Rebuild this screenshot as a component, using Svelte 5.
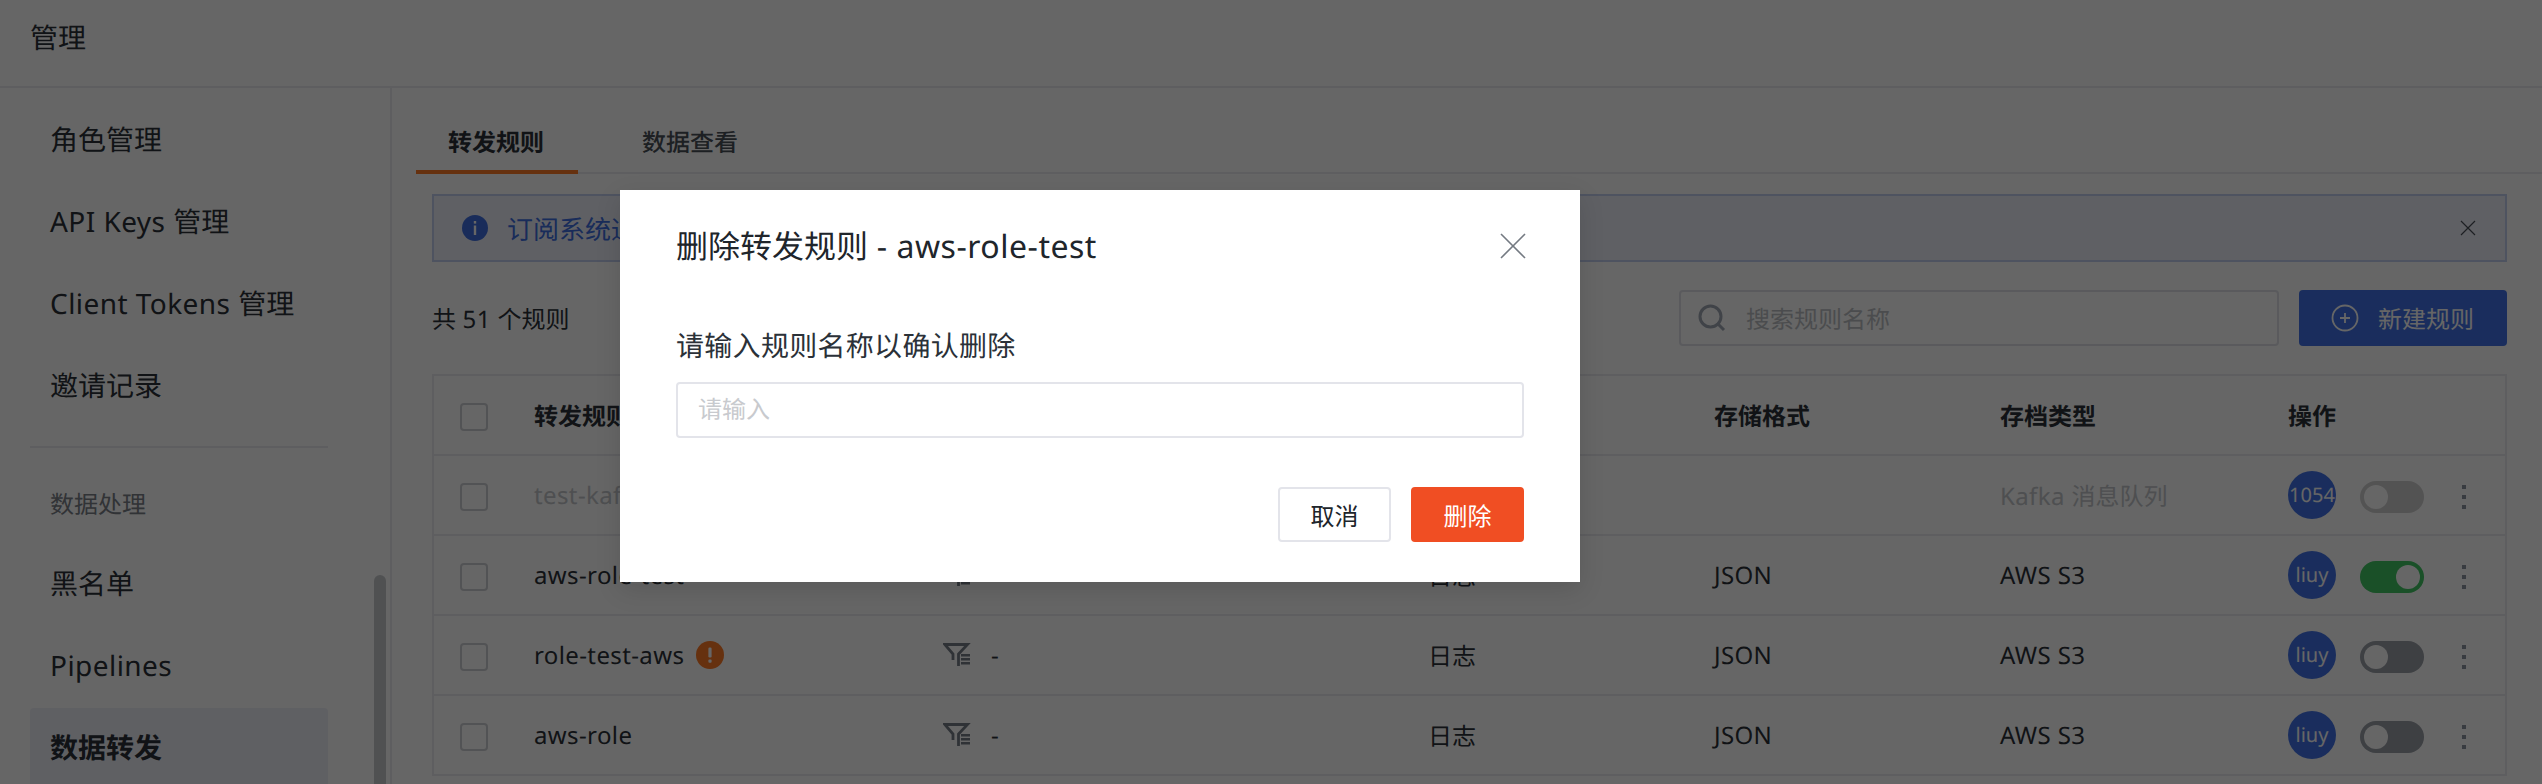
<script lang="ts">
  const nav_top = [`角色管理`, `API Keys 管理`, `Client Tokens 管理`, `邀请记录`]
  const nav_bottom = [`黑名单`, `Pipelines`]

  interface Rule {
    name: string
    filter?: string
    kind?: string
    format?: string
    archive: string
    owner: string
    on: boolean
    disabled?: boolean
    warn?: boolean
  }
  const rules: Rule[] = [
    { name: `test-kafka`, archive: `Kafka 消息队列`, owner: `1054`, on: false, disabled: true },
    { name: `aws-role-test`, filter: `-`, kind: `日志`, format: `JSON`, archive: `AWS S3`, owner: `liuy`, on: true },
    { name: `role-test-aws`, filter: `-`, kind: `日志`, format: `JSON`, archive: `AWS S3`, owner: `liuy`, on: false, warn: true },
    { name: `aws-role`, filter: `-`, kind: `日志`, format: `JSON`, archive: `AWS S3`, owner: `liuy`, on: false },
  ]

  // latin runs need a touch of tracking, cjk runs stay on the em grid
  const parts = (text: string) => text.split(/([\x00-\x7f]+)/).filter(Boolean)
  const is_latin = (text: string) => /^[\x00-\x7f]/.test(text)
</script>

{#snippet mixed(text)}
  {#each parts(text) as part}<span class:lat={is_latin(part)}>{part}</span>{/each}
{/snippet}

<div class="page">
  <header class="topbar">管理</header>
  <div class="body">
    <aside class="sidebar">
      <nav class="nav">
        {#each nav_top as item}
          <div class="nav-item">{@render mixed(item)}</div>
        {/each}
        <div class="nav-divider"></div>
        <div class="nav-group">数据处理</div>
        {#each nav_bottom as item}
          <div class="nav-item">{@render mixed(item)}</div>
        {/each}
        <div class="nav-item active">数据转发</div>
      </nav>
      <div class="scroll-thumb"></div>
    </aside>

    <main class="main">
      <div class="tabs">
        <div class="tab active">转发规则</div>
        <div class="tab">数据查看</div>
      </div>

      <div class="content">
        <div class="banner">
          <svg class="info" viewBox="0 0 26 26" width="26" height="26">
            <circle cx="13" cy="13" r="13" fill="#3f6fe0" />
            <rect x="11.8" y="6" width="2.4" height="2.6" fill="#fff" />
            <rect x="11.8" y="10.5" width="2.4" height="9.5" fill="#fff" />
          </svg>
          <span class="banner-text">订阅系统通知将发送至所配置的转发规则</span>
          <svg class="banner-close" viewBox="0 0 16 16" width="16" height="16">
            <path d="M1 1 15 15M15 1 1 15" stroke="#4a4f57" stroke-width="1.2" fill="none" />
          </svg>
        </div>

        <div class="toolbar">
          <span class="count">{@render mixed(`共 51 个规则`)}</span>
          <div class="search">
            <svg viewBox="0 0 30 30" width="30" height="30">
              <circle cx="13.5" cy="13.5" r="10.5" stroke="#a0a8b4" stroke-width="3" fill="none" />
              <path d="M21 21 27 27" stroke="#a0a8b4" stroke-width="3" fill="none" />
            </svg>
            <span>搜索规则名称</span>
          </div>
          <div class="create">
            <svg viewBox="0 0 28 28" width="28" height="28">
              <circle cx="14" cy="14" r="12.5" stroke="#fff" stroke-width="1.8" fill="none" />
              <path d="M14 9v10M9 14h10" stroke="#fff" stroke-width="1.8" fill="none" />
            </svg>
            <span>新建规则</span>
          </div>
        </div>

        <div class="table">
          <div class="row head">
            <span class="check"></span>
            <span>转发规则名称</span>
            <span>过滤条件</span>
            <span>数据类型</span>
            <span>存储格式</span>
            <span>存档类型</span>
            <span>操作</span>
          </div>
          {#each rules as rule}
            <div class="row" class:disabled={rule.disabled}>
              <span class="check"></span>
              <span class="name">
                <span class="lat">{rule.name}</span>
                {#if rule.warn}
                  <svg viewBox="0 0 28 28" width="28" height="28">
                    <circle cx="14" cy="14" r="14" fill="#ff7a26" />
                    <rect x="12.4" y="6.5" width="3.2" height="10" rx="1.2" fill="#fff" />
                    <rect x="12.4" y="18.5" width="3.2" height="3.2" rx="1" fill="#fff" />
                  </svg>
                {/if}
              </span>
              <span class="filter">
                {#if rule.filter}
                  <svg viewBox="0 0 28 24" width="28" height="24">
                    <path d="M10 17V11L1.8 1.5H24.5L15.5 11V23" stroke="#767e88" stroke-width="2.8" fill="none" />
                    <path d="M18 12.2h9M18 16.2h9M18 20.2h9" stroke="#767e88" stroke-width="2.4" fill="none" />
                  </svg>
                  <span>{rule.filter}</span>
                {/if}
              </span>
              <span>{rule.kind ?? ``}</span>
              <span class="lat">{rule.format ?? ``}</span>
              <span>{@render mixed(rule.archive)}</span>
              <span class="ops">
                <span class="avatar">{rule.owner}</span>
                <span class="toggle" class:on={rule.on}></span>
                <span class="more"><i></i><i></i><i></i></span>
              </span>
            </div>
          {/each}
        </div>
      </div>
    </main>
  </div>

  <div class="overlay">
    <div class="modal">
      <div class="modal-head">
        <h2>{@render mixed(`删除转发规则 - aws-role-test`)}</h2>
        <svg viewBox="0 0 26 26" width="26" height="26">
          <path d="M1 1 25 25M25 1 1 25" stroke="#747a82" stroke-width="1.6" fill="none" />
        </svg>
      </div>
      <div class="modal-label">请输入规则名称以确认删除</div>
      <div class="modal-input">请输入</div>
      <div class="modal-actions">
        <button class="btn">取消</button>
        <button class="btn danger">删除</button>
      </div>
    </div>
  </div>
</div>

<style>
  :global(body) {
    overflow: hidden;
  }
  .page {
    position: relative;
    height: 784px;
    overflow: hidden;
    background: #fff;
    color: #2b3138;
    font-family: 'Noto Sans', 'Noto Sans CJK SC', sans-serif;
    font-size: 24px;
    text-rendering: geometricPrecision;
  }
  .lat {
    letter-spacing: 0.016em;
  }
  .topbar {
    box-sizing: border-box;
    height: 88px;
    padding: 18px 30px 0;
    font-size: 28px;
    line-height: 40px;
    border-bottom: 2px solid #ebecf0;
  }
  .body {
    display: flex;
    height: 696px;
  }
  .sidebar {
    position: relative;
    box-sizing: border-box;
    flex: none;
    width: 392px;
    border-right: 2px solid #ebecf0;
    padding: 12px 62px 0 30px;
  }
  .nav {
    display: flex;
    flex-direction: column;
    gap: 2px;
  }
  .nav-item {
    height: 80px;
    flex: none;
    padding-left: 20px;
    font-size: 28px;
    line-height: 80px;
    border-radius: 4px;
  }
  .nav-item.active {
    background: #eef0f8;
    font-weight: 700;
  }
  .nav-divider {
    height: 2px;
    margin-top: 18px;
    background: #ebecf0;
  }
  .nav-group {
    margin: 35px 0 17px;
    padding-left: 20px;
    color: #7a8088;
    line-height: 40px;
  }
  .scroll-thumb {
    position: absolute;
    top: 487px;
    right: 4px;
    width: 12px;
    height: 240px;
    border-radius: 6px;
    background: #c9cbce;
  }
  .main {
    flex: 1;
    min-width: 0;
    padding-left: 24px;
  }
  .tabs {
    display: flex;
    gap: 32px;
    height: 86px;
    box-sizing: border-box;
    border-bottom: 2px solid #ebecf0;
  }
  .tab {
    width: 162px;
    height: 86px;
    box-sizing: border-box;
    padding-right: 2px;
    text-align: center;
    line-height: 110px;
    font-weight: 500;
    color: #4a5058;
  }
  .tab.active {
    font-weight: 700;
    color: #2b3138;
    border-bottom: 4px solid #ff7a26;
  }
  .content {
    padding: 20px 35px 0 16px;
  }
  .banner {
    box-sizing: border-box;
    display: flex;
    align-items: center;
    height: 68px;
    padding: 0 29px 0 28px;
    background: #eef1fa;
    border: 2px solid #c3cff0;
  }
  .banner-text {
    flex: 1;
    margin-left: 19px;
    font-size: 26px;
    color: #3f6fe0;
  }
  .toolbar {
    display: flex;
    align-items: center;
    margin-top: 28px;
  }
  .count {
    flex: 1;
  }
  .search {
    box-sizing: border-box;
    display: flex;
    align-items: center;
    gap: 19px;
    width: 600px;
    height: 56px;
    padding-left: 16px;
    border: 2px solid #e0e2e8;
    border-radius: 4px;
    color: #bcbfc4;
  }
  .create {
    display: flex;
    align-items: center;
    gap: 19px;
    height: 56px;
    width: 208px;
    box-sizing: border-box;
    padding-left: 32px;
    margin-left: 20px;
    border-radius: 4px;
    background: #4172e8;
    color: #fff;
  }
  .table {
    margin-top: 28px;
    border: 2px solid #ebecf0;
    border-bottom: 0;
  }
  .row {
    box-sizing: border-box;
    display: grid;
    grid-template-columns: 100px 409px 485px 286px 286px 288px 1fr;
    align-items: center;
    height: 80px;
    border-bottom: 2px solid #ebecf0;
  }
  .row.head {
    font-weight: 700;
  }
  .row.disabled > :not(.ops):not(.check) {
    color: #c3c6ca;
  }
  .check {
    box-sizing: border-box;
    width: 28px;
    height: 28px;
    margin: 3px 0 0 26px;
    border: 2px solid #ced0d4;
    border-radius: 4px;
  }
  .name {
    display: flex;
    align-items: center;
    gap: 12px;
  }
  .filter {
    display: flex;
    align-items: center;
    gap: 20px;
  }
  .ops {
    display: flex;
    align-items: center;
  }
  .avatar {
    flex: none;
    width: 48px;
    height: 48px;
    border-radius: 50%;
    background: #4172e8;
    color: #fff;
    font-size: 20px;
    line-height: 48px;
    text-align: center;
  }
  .toggle {
    position: relative;
    box-sizing: border-box;
    width: 64px;
    height: 32px;
    margin: 4px 0 0 24px;
    border-radius: 16px;
    background: #9ba0a8;
  }
  .toggle::after {
    content: '';
    position: absolute;
    top: 4px;
    left: 4px;
    width: 24px;
    height: 24px;
    border-radius: 50%;
    background: #fff;
  }
  .toggle.on {
    background: #42c765;
  }
  .toggle.on::after {
    left: 36px;
  }
  .disabled .toggle {
    background: #d0d0d0;
  }
  .more {
    display: flex;
    flex-direction: column;
    gap: 6px;
    margin: 4px 0 0 38px;
  }
  .more i {
    width: 4px;
    height: 4px;
    background: #8d95a0;
  }
  .overlay {
    position: absolute;
    inset: 0;
    background: rgba(0, 0, 0, 0.6);
  }
  .modal {
    position: absolute;
    top: 190px;
    left: 620px;
    box-sizing: border-box;
    width: 960px;
    height: 392px;
    padding: 0 56px;
    background: #fff;
    box-shadow: 0 8px 24px rgba(0, 0, 0, 0.12);
  }
  .modal-head {
    display: flex;
    align-items: center;
    justify-content: space-between;
    height: 112px;
    color: #20252b;
  }
  .modal-head h2 {
    margin: -3px 0 0;
    font-size: 32px;
    font-weight: 400;
  }
  .modal-head svg {
    margin-right: -2px;
  }
  .modal-label {
    margin-top: 24px;
    font-size: 28px;
    line-height: 40px;
    letter-spacing: 0.3px;
  }
  .modal-input {
    box-sizing: border-box;
    height: 56px;
    margin-top: 16px;
    padding-left: 20px;
    line-height: 52px;
    color: #c8cace;
    border: 2px solid #e3e4ea;
    border-radius: 4px;
  }
  .modal-actions {
    display: flex;
    justify-content: flex-end;
    gap: 20px;
    margin-top: 49px;
  }
  .btn {
    box-sizing: border-box;
    width: 113px;
    height: 55px;
    padding: 0;
    background: #fff;
    border: 2px solid #e3e4ea;
    border-radius: 4px;
    color: #20252b;
    font: inherit;
  }
  .btn.danger {
    background: #f04e23;
    border-color: #f04e23;
    color: #fff;
  }
</style>
